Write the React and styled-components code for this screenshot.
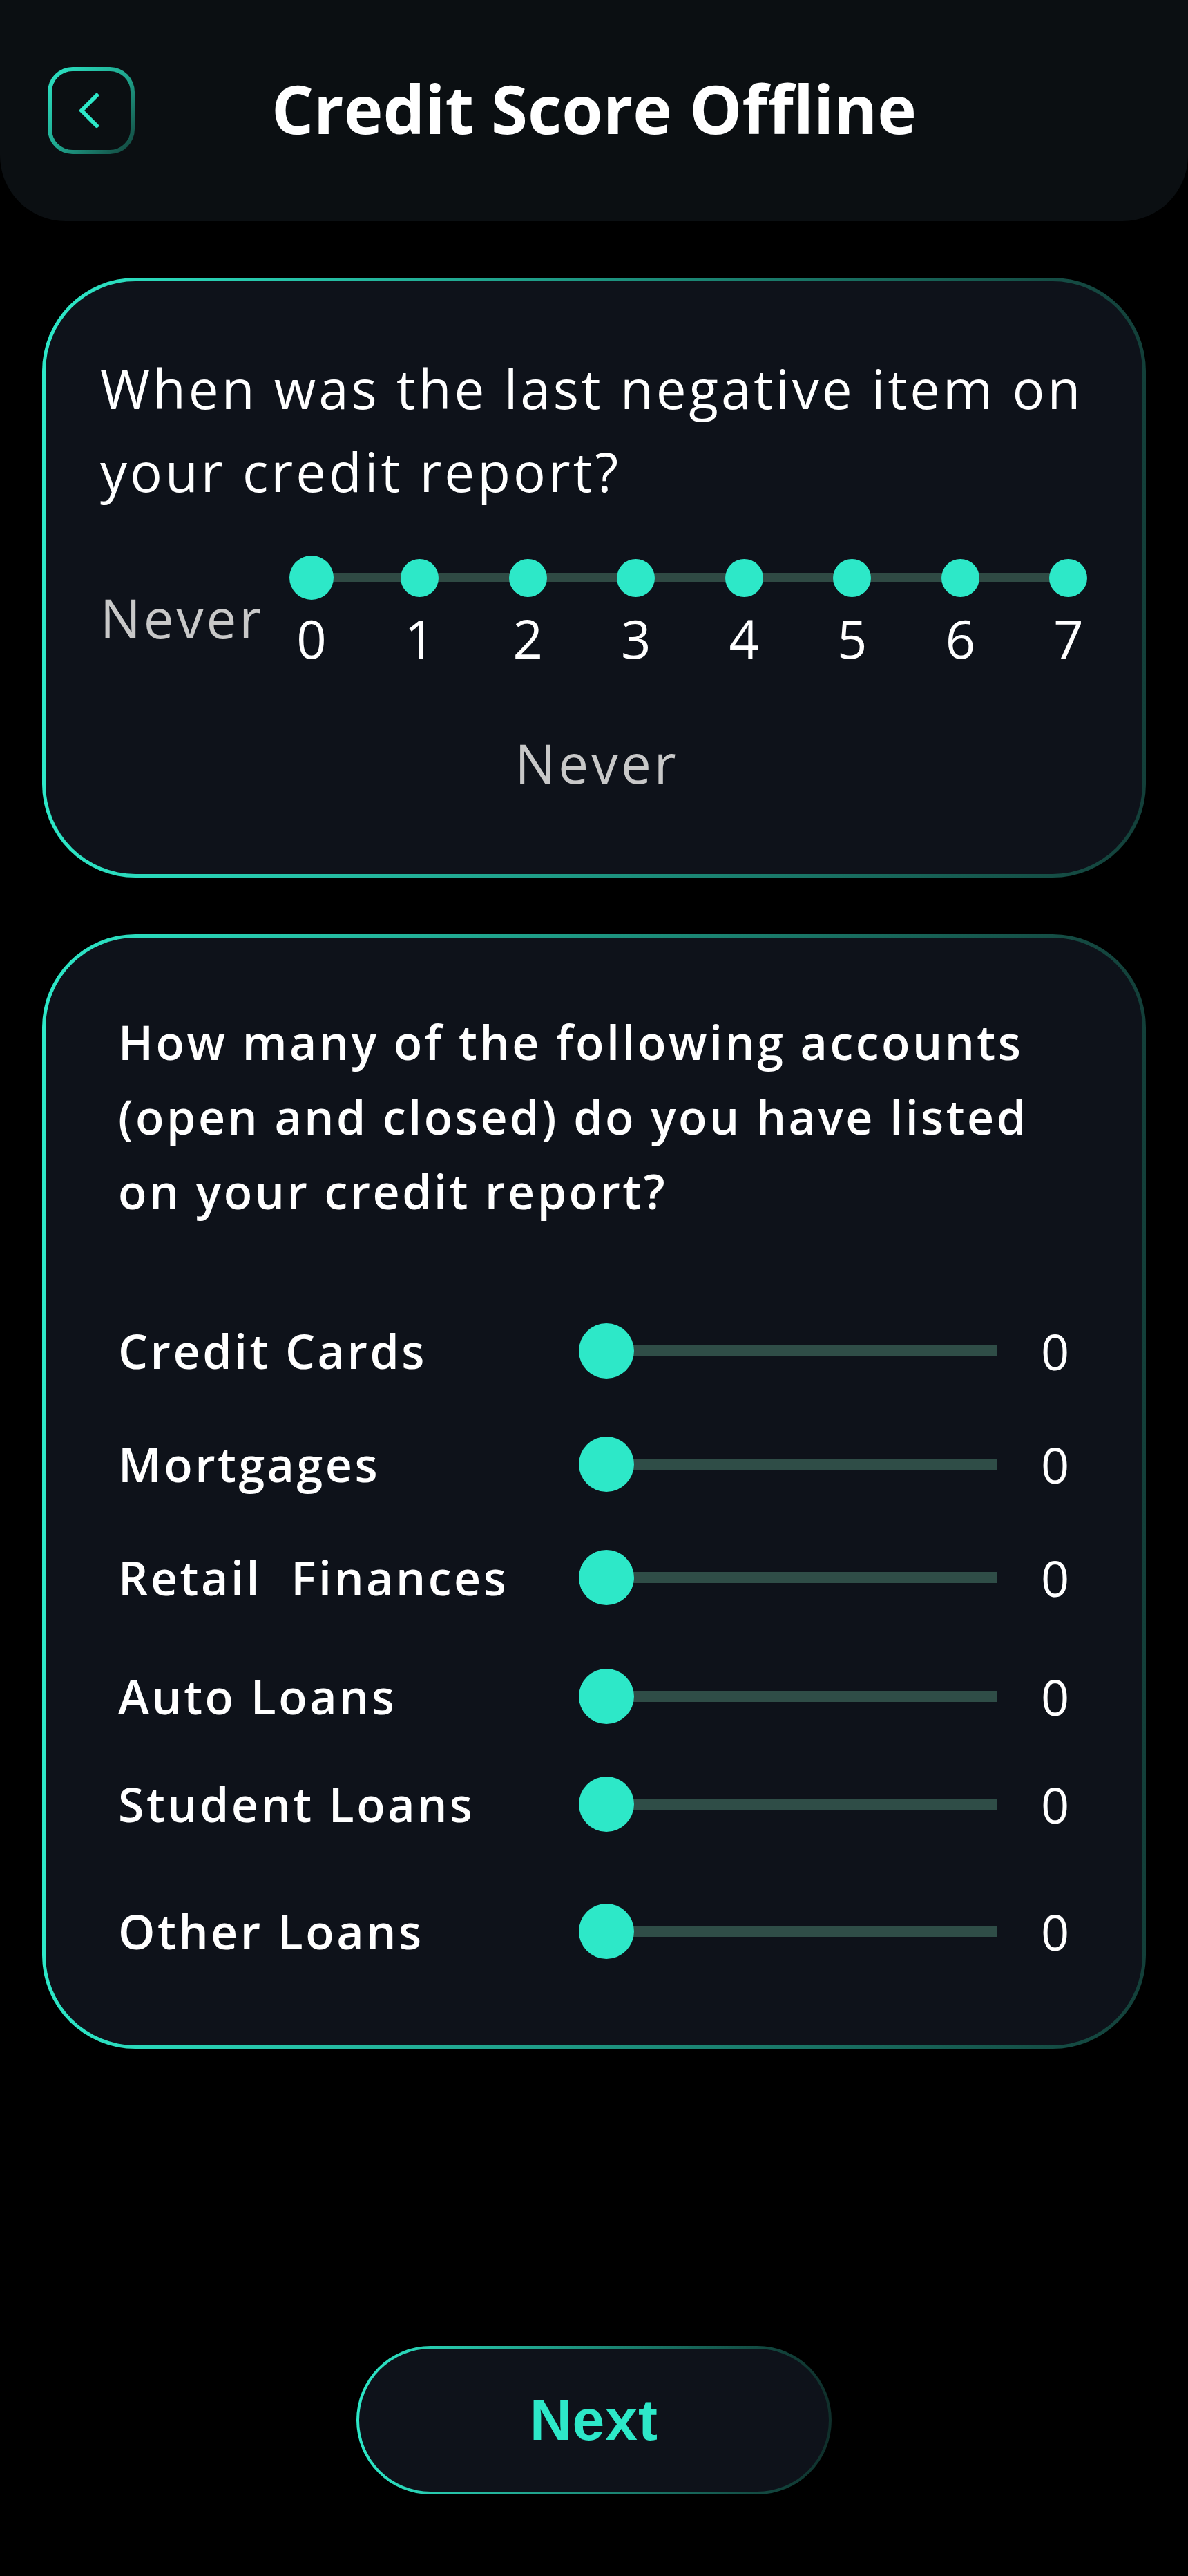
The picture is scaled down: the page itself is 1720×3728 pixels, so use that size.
import React from "react";
import styled, { createGlobalStyle } from "styled-components";

const TEAL = "#2de8c8";
const CARD_BG = "#0e121a";

const Global = createGlobalStyle`
  html, body {
    margin: 0;
    padding: 0;
    background: #000;
  }
  body {
    font-family: "Open Sans", "Noto Sans", sans-serif;
    color: #fff;
  }
  * { box-sizing: border-box; }
`;

const Page = styled.div`
  width: 1720px;
  min-height: 3728px;
  background: #000;
  display: flex;
  flex-direction: column;
  align-items: stretch;
`;

const Header = styled.header`
  height: 320px;
  background: #0b0f12;
  border-radius: 0 0 95px 95px;
  display: grid;
  grid-template-columns: 1fr auto 1fr;
  align-items: center;
  padding: 0 69px;
`;

const BackButton = styled.button`
  width: 126px;
  height: 126px;
  border-radius: 36px;
  border: 6px solid transparent;
  background:
    linear-gradient(#0b0f12, #0b0f12) padding-box,
    linear-gradient(135deg, ${TEAL} 0%, #1fa88f 50%, #123f38 100%) border-box;
  display: flex;
  align-items: center;
  justify-content: center;
  padding: 0;
  cursor: pointer;
  justify-self: start;
`;

const Title = styled.h1`
  margin: 0 0 6px;
  font-family: "Open Sans", sans-serif;
  font-weight: 700;
  font-size: 96px;
  line-height: 1;
  color: #fff;
  white-space: nowrap;
`;

const Card = styled.section`
  margin: 82px 61px 0;
  border: 5px solid transparent;
  border-radius: 135px;
  background:
    linear-gradient(${CARD_BG}, ${CARD_BG}) padding-box,
    linear-gradient(90deg, ${TEAL} 0%, #1c8d7a 55%, #133f39 100%) border-box;
  padding: ${(p) => p.$pad};
  display: flex;
  flex-direction: column;
`;

const Question = styled.p`
  margin: 0 ${(p) => p.$mr || 0}px 0 0;
  font-size: ${(p) => p.$size}px;
  font-weight: ${(p) => p.$weight};
  line-height: ${(p) => p.$lh}px;
  letter-spacing: ${(p) => p.$ls}px;
  color: #fff;
`;

const ScaleRow = styled.div`
  margin-top: 62px;
  display: grid;
  grid-template-columns: 274px 1fr;
  padding-right: 0;
  align-items: start;
`;

const MutedLabel = styled.span`
  font-size: 78px;
  line-height: 1;
  letter-spacing: 4px;
  color: #c8c8c8;
  margin-top: ${(p) => p.$mt || 0}px;
`;

const Scale = styled.div`
  display: flex;
  flex-direction: column;
`;

const DotsRow = styled.div`
  position: relative;
  height: 64px;
  display: flex;
  justify-content: space-between;
  align-items: center;
  &::before {
    content: "";
    position: absolute;
    left: 32px;
    right: 32px;
    top: 25px;
    height: 13px;
    background: #2f4a44;
  }
`;

const DotCell = styled.div`
  width: 64px;
  display: flex;
  justify-content: center;
  position: relative;
  z-index: 1;
`;

const Dot = styled.span`
  width: ${(p) => p.$size}px;
  height: ${(p) => p.$size}px;
  border-radius: 50%;
  background: ${TEAL};
`;

const NumbersRow = styled.div`
  margin-top: 18px;
  display: flex;
  justify-content: space-between;
`;

const Num = styled.span`
  width: 64px;
  text-align: center;
  font-size: 76px;
  line-height: 1;
  color: #fff;
`;

const CenterLabel = styled(MutedLabel)`
  margin-top: 103px;
  text-align: center;
  padding-left: 4px;
`;

const AccountRow = styled.div`
  margin-top: ${(p) => p.$mt}px;
  height: 100px;
  display: grid;
  grid-template-columns: 667px 606px 1fr;
  align-items: center;
`;

const AccountLabel = styled.span`
  font-size: 68px;
  font-weight: 600;
  letter-spacing: 3.5px;
  line-height: 1;
  color: #fff;
  white-space: pre;
`;

const Slider = styled.div`
  position: relative;
  height: 80px;
  display: flex;
  align-items: center;
  &::before {
    content: "";
    position: absolute;
    left: 40px;
    right: 0;
    top: 32px;
    height: 16px;
    background: #2f4d47;
  }
`;

const Thumb = styled.span`
  position: relative;
  z-index: 1;
  width: 80px;
  height: 80px;
  border-radius: 50%;
  background: ${TEAL};
`;

const Value = styled.span`
  font-size: 72px;
  font-weight: 500;
  line-height: 1;
  color: #fff;
  justify-self: start;
  margin-left: 63px;
`;

const Footer = styled.div`
  margin-top: 430px;
  display: flex;
  justify-content: center;
`;

const NextButton = styled.button`
  width: 688px;
  height: 215px;
  border-radius: 108px;
  border: 4px solid transparent;
  background:
    linear-gradient(${CARD_BG}, ${CARD_BG}) padding-box,
    linear-gradient(90deg, ${TEAL} 0%, #1c8d7a 50%, #0f2e2a 100%) border-box;
  color: ${TEAL};
  font-family: "Liberation Sans", Arial, sans-serif;
  font-weight: 700;
  font-size: 84px;
  letter-spacing: 1px;
  cursor: pointer;
  padding: 0;
`;

const Chevron = () => (
  <svg width="60" height="60" viewBox="0 0 60 60" fill="none">
    <polyline
      points="38,8 16,30 38,52"
      stroke={TEAL}
      strokeWidth="6"
      strokeLinecap="round"
      strokeLinejoin="round"
    />
  </svg>
);

const accounts = [
  { label: "Credit Cards", mt: 127 },
  { label: "Mortgages", mt: 64 },
  { label: "Retail  Finances", mt: 64 },
  { label: "Auto Loans", mt: 72 },
  { label: "Student Loans", mt: 56 },
  { label: "Other Loans", mt: 84 },
];

export default function App() {
  return (
    <>
      <Global />
      <Page>
        <Header>
          <BackButton aria-label="Back">
            <Chevron />
          </BackButton>
          <Title>Credit Score Offline</Title>
          <span />
        </Header>

        <Card $pad="95px 75px 122px 79px">
          <Question $size={78} $weight={400} $lh={120} $ls={4} $mr={-35}>
            When was the last negative item on your credit report?
          </Question>
          <ScaleRow>
            <MutedLabel $mt={51}>Never</MutedLabel>
            <Scale>
              <DotsRow>
                {[0, 1, 2, 3, 4, 5, 6, 7].map((n) => (
                  <DotCell key={n}>
                    <Dot $size={n === 0 ? 64 : 55} />
                  </DotCell>
                ))}
              </DotsRow>
              <NumbersRow>
                {[0, 1, 2, 3, 4, 5, 6, 7].map((n) => (
                  <Num key={n}>{n}</Num>
                ))}
              </NumbersRow>
            </Scale>
          </ScaleRow>
          <CenterLabel>Never</CenterLabel>
        </Card>

        <Card $pad="97px 94px 115px 105px">
          <Question $size={68} $weight={600} $lh={108} $ls={3.5}>
            How many of the following accounts (open and closed) do you have
            listed on your credit report?
          </Question>
          {accounts.map((a) => (
            <AccountRow key={a.label} $mt={a.mt}>
              <AccountLabel>{a.label}</AccountLabel>
              <Slider>
                <Thumb />
              </Slider>
              <Value>0</Value>
            </AccountRow>
          ))}
        </Card>

        <Footer>
          <NextButton>Next</NextButton>
        </Footer>
      </Page>
    </>
  );
}
